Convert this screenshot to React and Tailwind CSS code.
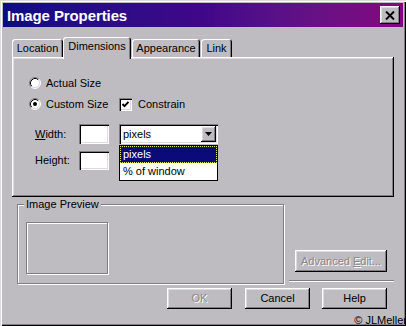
import React from "react";

const raised =
  "shadow-[inset_-1px_-1px_0_#000,inset_1px_1px_0_#fff,inset_-2px_-2px_0_#807d83,inset_2px_2px_0_#dedbe0]";
const sunken =
  "shadow-[inset_1px_1px_0_#807d83,inset_2px_2px_0_#000,inset_-1px_-1px_0_#fff,inset_-2px_-2px_0_#dedbe0]";
const etched = "border border-[#807d83] shadow-[inset_1px_1px_0_#fff,1px_1px_0_#fff]";

const Radio = ({ checked }) => (
  <svg width="12" height="12" viewBox="0 0 12 12" className="shrink-0">
    <circle cx="6" cy="6" r="5" fill="#fff" />
    <path d="M2.11 9.89 A5.5 5.5 0 0 1 9.89 2.11" stroke="#807d83" fill="none" />
    <path d="M9.89 2.11 A5.5 5.5 0 0 1 2.11 9.89" stroke="#fff" fill="none" />
    <path d="M2.82 9.18 A4.5 4.5 0 0 1 9.18 2.82" stroke="#000" fill="none" />
    <path d="M9.18 2.82 A4.5 4.5 0 0 1 2.82 9.18" stroke="#dedbe0" fill="none" />
    {checked && <circle cx="6" cy="6" r="2" fill="#000" />}
  </svg>
);

const Checkbox = () => (
  <div className={`w-[13px] h-[13px] bg-white shrink-0 ${sunken}`}>
    <svg width="13" height="13" viewBox="0 0 13 13">
      <path d="M3.5 6 L5.5 8.2 L9.5 3.8" stroke="#000" strokeWidth="1.9" fill="none" />
    </svg>
  </div>
);

const Button = ({ children, disabled, className = "" }) => (
  <div
    className={`h-[21px] flex items-center justify-center bg-[#bebbc1] ${raised} ${
      disabled ? "text-[#8a878c] [text-shadow:1px_1px_0_#fff]" : "text-black"
    } ${className}`}
  >
    {children}
  </div>
);

const Tab = ({ label, active, w }) =>
  active ? (
    <div
      className={`relative z-10 h-[22px] -mb-[2px] ${w} bg-[#bebbc1] rounded-t-[3px] shadow-[inset_1px_1px_0_#fff,inset_-1px_0_0_#000,inset_-2px_0_0_#807d83] flex justify-center pt-[3px]`}
    >
      {label}
    </div>
  ) : (
    <div
      className={`h-[18px] ${w} bg-[#bebbc1] rounded-t-[3px] shadow-[inset_1px_1px_0_#fff,inset_-1px_0_0_#000,inset_-2px_0_0_#807d83] flex justify-center pt-[3px]`}
    >
      {label}
    </div>
  );

export default function App() {
  return (
    <div className="relative w-[406px] h-[326px] overflow-hidden bg-[#bebbc1] p-[3px] flex flex-col font-['Liberation_Sans',Arial,sans-serif] text-[11px] leading-[13px] text-black shadow-[inset_1px_1px_0_#dedbe0,inset_2px_2px_0_#fff,inset_-1px_-1px_0_#000,inset_-2px_-2px_0_#807d83]">
      {/* title bar */}
      <div className="h-[24px] shrink-0 flex items-center justify-between pl-[4px] pr-[3px] bg-linear-to-r from-[#0a0c84] via-[#40068a] to-[#86037f]">
        <span className="text-white font-bold text-[15px] leading-[18px] tracking-[-0.1px] pt-px">
          Image Properties
        </span>
        <div className={`w-[20px] h-[18px] bg-[#bebbc1] flex items-center justify-center ${raised}`}>
          <svg width="10" height="9" viewBox="0 0 10 9">
            <path d="M1 0.5 L9 8.5 M9 0.5 L1 8.5" stroke="#000" strokeWidth="2" />
          </svg>
        </div>
      </div>

      {/* tabs */}
      <div className="mt-[10px] ml-[9px] flex items-end h-[20px]">
        <Tab label="Location" w="w-[51px]" />
        <Tab label="Dimensions" w="w-[68px]" active />
        <div className="ml-px">
          <Tab label="Appearance" w="w-[68px]" />
        </div>
        <div className="ml-px">
          <Tab label="Link" w="w-[31px]" />
        </div>
      </div>

      {/* panel */}
      <div className={`ml-[9px] w-[382px] h-[140px] shrink-0 pt-[19px] pl-[17px] flex flex-col ${raised}`}>
        <div className="flex items-center h-[14px] gap-[5px]">
          <Radio />
          <span>Actual Size</span>
        </div>
        <div className="flex items-center h-[14px] mt-[7px]">
          <div className="w-[90px] flex items-center gap-[5px]">
            <Radio checked />
            <span>Custom Size</span>
          </div>
          <Checkbox />
          <span className="ml-[6px]">Constrain</span>
        </div>
        <div className="flex items-center h-[20px] mt-[13px] pl-[6px]">
          <span className="w-[44px]">
            <span className="underline">W</span>idth:
          </span>
          <div className={`w-[30px] h-[20px] bg-white ${sunken}`} />
          <div className={`relative ml-[10px] w-[99px] h-[20px] bg-white flex items-center ${sunken}`}>
            <span className="pl-[4px] flex-1">pixels</span>
            <div className={`w-[15px] h-[16px] mr-[2px] bg-[#bebbc1] flex items-center justify-center ${raised}`}>
              <svg width="7" height="4" viewBox="0 0 7 4">
                <polygon points="0,0 7,0 3.5,4" fill="#000" />
              </svg>
            </div>
            <div className="absolute z-20 left-0 top-[21px] w-[99px] h-[36px] bg-white border border-black flex flex-col">
              <div className="h-[17px] bg-[#0a0a78] text-white pl-[3px] flex items-center outline-1 outline-dotted outline-[#f0e070] -outline-offset-1">
                pixels
              </div>
              <div className="h-[17px] pl-[3px] flex items-center">% of window</div>
            </div>
          </div>
        </div>
        <div className="flex items-center h-[19px] mt-[7px] pl-[6px]">
          <span className="w-[44px]">Height:</span>
          <div className={`w-[30px] h-[19px] bg-white ${sunken}`} />
        </div>
      </div>

      {/* preview + advanced */}
      <div className="mt-[7px] flex">
        <div className={`relative ml-[14px] w-[267px] h-[80px] pt-[17px] pl-[8px] ${etched}`}>
          <span className="absolute -top-[7px] left-[6px] px-[2px] bg-[#bebbc1]">Image Preview</span>
          <div className={`w-[82px] h-[52px] ${etched}`} />
        </div>
        <div className="ml-[5px] w-[105px] flex flex-col">
          <Button disabled className="ml-[6px] mt-[46px] w-[92px] h-[22px]">
            <span>
              Advanced <span className="underline">E</span>dit...
            </span>
          </Button>
          <div className="mt-[8px] h-[2px] border-t border-[#807d83] border-b border-b-white" />
        </div>
      </div>

      {/* buttons */}
      <div className="mt-[4px] ml-[164px] flex">
        <Button disabled className="w-[65px]">OK</Button>
        <Button className="w-[65px] ml-[13px]">Cancel</Button>
        <Button className="w-[65px] ml-[12px]">Help</Button>
      </div>

      <span className="absolute right-[-1px] bottom-[-1px] text-[11px]">© JLMeller</span>
    </div>
  );
}
